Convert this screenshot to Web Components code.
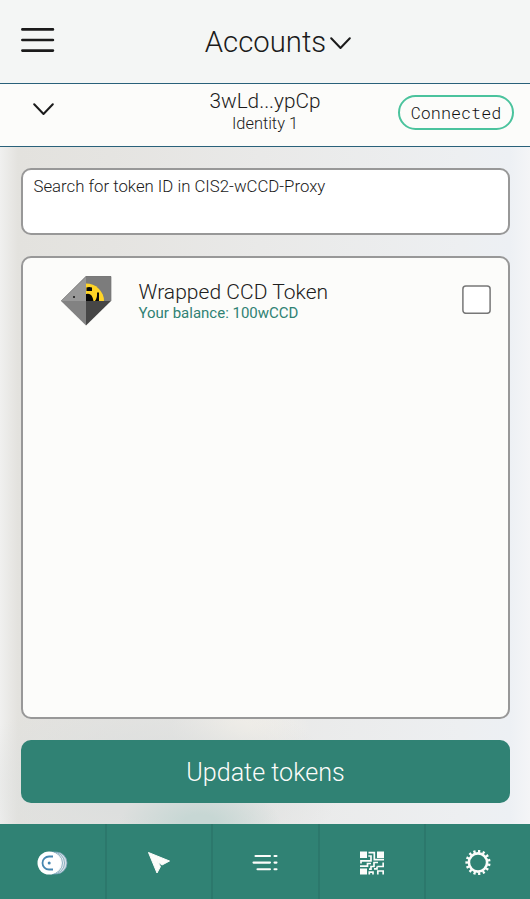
<!DOCTYPE html>
<html lang="en"><head><meta charset="utf-8"><title>Accounts</title>
<style>
html,body{margin:0;height:100%;overflow:hidden}
body{font-family:Roboto,"Liberation Sans",sans-serif;font-weight:300;color:#1b1b1b;--green:#308274}
</style></head><body>
<wallet-app></wallet-app>
<script>
function define(name, markup){
  customElements.define(name, class extends HTMLElement{
    constructor(){
      super();
      const t=document.createElement('template');
      t.innerHTML=markup;
      this.attachShadow({mode:'open'}).append(t.content.cloneNode(true));
    }
  });
}
define('chevron-icon',`<style>:host{display:block;width:21px;height:13px}svg{display:block}</style>
<svg width="21" height="13" viewBox="0 0 21 13"><path d="M1.2 1.2 10.5 11 19.8 1.2" fill="none" stroke="#1b1b1b" stroke-width="2" stroke-linecap="round" stroke-linejoin="round"/></svg>`);
define('app-header',`<style>
:host{display:grid;grid-template-columns:54px 1fr 54px;align-items:center;height:83px;background:#f4f6f5;border-bottom:1px solid #29617a;box-sizing:content-box}
.menu{padding-left:21px;margin-top:-3px}svg{display:block}
.title{display:flex;justify-content:center;align-items:center;gap:4px;font-size:29.3px;line-height:35px;padding:1px 0 0 26px}
chevron-icon{margin-top:2px}
</style><div class="menu"><svg width="34" height="26" viewBox="0 0 34 26"><path d="M1.4 2.4H31.9M1.4 13H31.9M1.4 23.6H31.9" stroke="#1b1b1b" stroke-width="2.7" stroke-linecap="round"/></svg></div>
<div class="title"><slot></slot><chevron-icon></chevron-icon></div>`);
define('account-bar',`<style>
:host{display:grid;grid-template-columns:132px 1fr 132px;height:62px;background:#fcfcfa;border-bottom:1px solid #29617a}
chevron-icon{margin:19px 0 0 33px}
.id{text-align:center;padding-top:5px}
.name{font-size:20.8px;line-height:24px}.sub{font-size:16.4px;line-height:21px}
.pill{box-sizing:border-box;width:116px;height:35px;margin-top:11px;border:2px solid #4bc39d;border-radius:18px;font:350 16.8px/32px "Roboto Mono","Liberation Mono",monospace;color:#111;text-align:center}
</style><chevron-icon></chevron-icon><div class="id"><div class="name"><slot name="account"></slot></div><div class="sub"><slot name="identity"></slot></div></div><div class="pill"><slot name="status"></slot></div>`);
define('token-search',`<style>:host{display:block;box-sizing:border-box;height:67px;border:2px solid #989898;border-radius:10px;background:#fff;padding:7px 10.5px;font-size:16.78px;line-height:19px}</style><slot></slot>`);
define('token-logo',`<style>:host,svg{display:block;width:51px;height:50px}</style>
<svg viewBox="0 0 51 50"><path d="M25 0V25H0Z" fill="#989898"/><path d="M25 0H50V25H25Z" fill="#7c7c7c"/><path d="M0 25H25V49.5Z" fill="#828282"/><path d="M25 25H50L25 49.5Z" fill="#464646"/><path d="M0 25 25 .5H50V25" fill="none" stroke="#777" stroke-width=".7"/>
<path d="M25 7.5A18 17.5 0 0 1 43 25H25Z" fill="#ffd426"/><path d="M25 18Q31 16 32.5 25H25ZM25.5 11.5Q28 10.5 31 11.5V15H25.5ZM36 16.5H38V25H34Q36.5 22 36 16.5Z" fill="#080808"/><circle cx="13" cy="21" r="1" fill="#111"/></svg>`);
define('token-row',`<style>
:host{display:grid;grid-template-columns:77.5px 1fr 29px;align-items:start;padding:18px 17px 0 38px}
.text{font-weight:350;padding-top:4px}.name{font-size:21px;line-height:24px;color:#202020;letter-spacing:.04px}.bal{font-size:15px;line-height:18px;color:var(--green);font-weight:400}
svg{display:block;margin-top:9px}
</style><token-logo></token-logo><div class="text"><div class="name"><slot name="name"></slot></div><div class="bal"><slot name="balance"></slot></div></div><svg width="29" height="29"><rect x=".9" y="1.1" width="27.2" height="27.2" rx="3" fill="#fff" stroke="#777" stroke-width="1.5"/></svg>`);
define('token-list',`<style>:host{display:block;box-sizing:border-box;height:463px;border:2px solid #989898;border-radius:10px;background:#fcfcfa}</style><slot></slot>`);
define('update-button',`<style>:host{display:block}button{display:block;width:100%;height:63px;border:0;border-radius:10px;background:var(--green);color:#fcfcfa;font:300 25.1px/65px Roboto,sans-serif;padding:0}</style><button><slot></slot></button>`);
define('nav-bar',`<style>:host{display:grid;grid-template-columns:106.5px 106px 107px 106px 1fr;height:75px;background:var(--green)}</style><slot></slot>`);
define('nav-item',`<style>:host{display:flex;align-items:center;justify-content:center;box-sizing:border-box;border-right:2px solid #2c786c;padding-top:2px}:host(:last-child){border:0}::slotted(svg){display:block}</style><slot></slot>`);
define('wallet-app',`<style>
:host{display:flex;flex-direction:column;height:899px;width:530px}
main{flex:1;display:flex;flex-direction:column;gap:21px;padding:21px 20px 0 21px;
background:radial-gradient(ellipse 80px 38px at 200px 675px,#c7d7d4 0 20%,#c8d6d400 100%),radial-gradient(ellipse 190px 100px at 150px 640px,#dddfde 0 30%,#dedfde00 100%),radial-gradient(ellipse 70px 35px at 240px 580px,#f4f1eb 0 15%,#f5f2ec00 100%),linear-gradient(90deg,#f0f0ef 0,#e3e2de 18px,#e5e4e1 110px,#e9e9e8 260px,#edeff1 460px,#edf0f4 510px,#f4f5f7 530px)}
</style>
<app-header>Accounts</app-header>
<account-bar><span slot="account">3wLd...ypCp</span><span slot="identity">Identity 1</span><span slot="status">Connected</span></account-bar>
<main><token-search>Search for token ID in CIS2-wCCD-Proxy</token-search>
<token-list><token-row><span slot="name">Wrapped CCD Token</span><span slot="balance">Your balance: 100wCCD</span></token-row></token-list>
<update-button>Update tokens</update-button></main>
<nav-bar>
<nav-item><svg width="31" height="24" viewBox="0 0 31 24"><circle cx="19" cy="12" r="11" fill="#d5dee6" stroke="#719fb4" stroke-width=".8"/><circle cx="16.5" cy="12" r="11" fill="#e8edf2" stroke="#719fb4" stroke-width=".8"/><circle cx="14.5" cy="12" r="11" fill="#f4f6f8" stroke="#719fb4" stroke-width=".8"/><circle cx="12" cy="12" r="11.5" fill="#fff"/><path d="M16 5.5H12A6.5 6.5 0 0 0 12 18.5H16" fill="none" stroke="#4686b0" stroke-width="1.8"/><circle cx="12.2" cy="12.1" r="1.5" fill="#4686b0"/></svg></nav-item>
<nav-item><svg width="22" height="22" viewBox="0 0 22 22"><path d="M.5.5 21.5 9 14 13 9.5 9.8 12.5 14.5 9 21Z" fill="#fcfcfa" stroke="#fcfcfa" stroke-linejoin="round"/></svg></nav-item>
<nav-item><svg width="26" height="17" viewBox="0 0 26 17"><path d="M3.5 2H18M1.5 8.6H18M5.5 15.2H18M22.5 2H24.5M22.5 8.6H24.5M22.5 15.2H24.5" stroke="#fcfcfa" stroke-width="2.1" stroke-linecap="round"/></svg></nav-item>
<nav-item><svg width="24" height="24" viewBox="0 0 24 24"><path d="M0 .5H7V7H0ZM17 .5H24V7H17ZM0 17.5H7V23.5H0Z" fill="#fcfcfa"/><path d="M8.5 1.7H14.3V8.7H24M8.3 5H11V9.8H1V12.5M0 15.2H7.5V12.5H11M9 18.2H11V15.5H14V11.5H18M17.3 15.5H23.2V11.5M14 17.8H17V15.5M9.3 23.5V21.2H13V23.5M17.8 23.5V20H23.2V23.5" fill="none" stroke="#fcfcfa" stroke-width="1.7"/></svg></nav-item>
<nav-item><svg width="26" height="26" viewBox="0 0 26 26"><circle cx="13" cy="12.5" r="9.1" fill="none" stroke="#fcfcfa" stroke-width="2.6"/><circle cx="13" cy="12.5" r="11.2" fill="none" stroke="#fcfcfa" stroke-width="2.8" pathLength="150" stroke-dasharray="4.8 5.2" transform="rotate(-90 13 12.5)"/></svg></nav-item>
</nav-bar>`);
</script></body></html>
